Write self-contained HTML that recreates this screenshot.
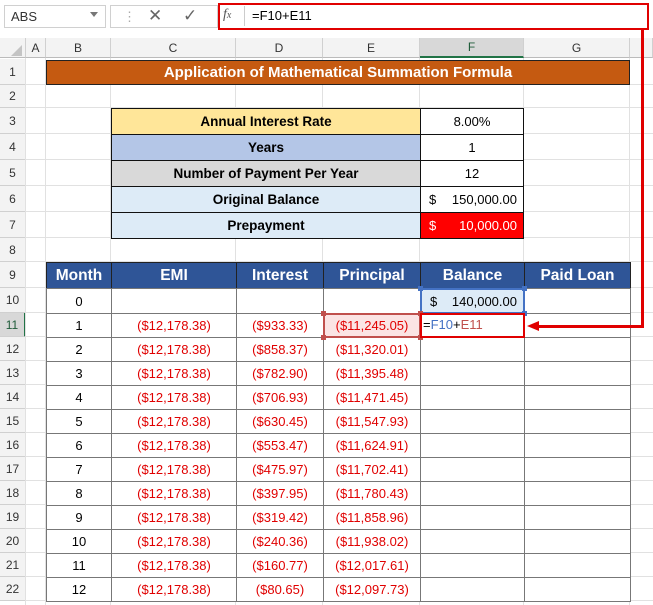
<!DOCTYPE html>
<html><head><style>
*{margin:0;padding:0;box-sizing:border-box}
body{width:653px;height:605px;overflow:hidden;background:#fff;font-family:"Liberation Sans",Calibri,sans-serif;position:relative;font-size:13px}
.a{position:absolute}
.c{position:absolute;display:flex;align-items:center;justify-content:center;white-space:nowrap}
.ch{position:absolute;top:38px;height:20px;display:flex;align-items:center;justify-content:center;color:#333;font-size:12px;border-right:1px solid #d0d0d0;background:#f3f3f3;border-bottom:1px solid #bbb}
.rh{position:absolute;left:0;width:26px;display:flex;align-items:center;justify-content:center;color:#333;font-size:12px;background:#f3f3f3;border-bottom:1px solid #d0d0d0;border-right:1px solid #bbb}
.red{color:#e00000}
</style></head><body>
<!-- top bar -->
<div class="a" style="left:0;top:0;width:653px;height:38px;background:#fff"></div>
<div class="a" style="left:4px;top:5px;width:102px;height:23px;border:1px solid #d0d0d0"></div>
<div class="a" style="left:11px;top:9px;font-size:13px;color:#333">ABS</div>
<div class="a" style="left:90px;top:12px;width:0;height:0;border-left:4px solid transparent;border-right:4px solid transparent;border-top:5px solid #777"></div>
<div class="a" style="left:123px;top:9px;color:#aaa">⋮</div>
<div class="a" style="left:110px;top:5px;width:108px;height:23px;border:1px solid #d0d0d0"></div>
<div class="a" style="left:148px;top:6px;font-size:17px;color:#666">✕</div>
<div class="a" style="left:183px;top:6px;font-size:17px;color:#666">✓</div>
<div class="a" style="left:218px;top:3px;width:431px;height:27px;border:2px solid #e00000"></div>
<div class="a" style="left:244px;top:6px;width:1px;height:20px;background:#ccc"></div>
<div class="a" style="left:223px;top:7px;font-family:'Liberation Serif',serif;font-style:italic;color:#555;font-size:14px">f<span style="font-size:10px">x</span></div>
<div class="a" style="left:252px;top:8px;font-size:13px;color:#000">=F10+E11</div>
<div class="a" style="left:0;top:30px;width:653px;height:8px;background:#fff"></div>
<!-- column headers -->
<div class="ch" style="left:0;width:26px;background:#f3f3f3"><div style="width:0;height:0;border-left:11px solid transparent;border-bottom:11px solid #c4c4c4;margin:6px 0 0 8px"></div></div>
<div class="ch" style="left:26px;width:20px">A</div>
<div class="ch" style="left:46px;width:65px">B</div>
<div class="ch" style="left:111px;width:125px">C</div>
<div class="ch" style="left:236px;width:87px">D</div>
<div class="ch" style="left:323px;width:97px">E</div>
<div class="ch" style="left:420px;width:104px;background:#d8d8d8;border-bottom:2px solid #217346;color:#1e5b39">F</div>
<div class="ch" style="left:524px;width:106px">G</div>
<div class="ch" style="left:630px;width:23px"></div>
<div id="g"></div>
<script>
var tops=[59,85,108,134,160,186,212,238,262,288,313,337];for(var i=13;i<=23;i++)tops.push(361+(i-13)*24);
var h='';
var cols=[46,111,236,323,420,524,630];
for(var r=1;r<=22;r++){var t=tops[r-1],b=tops[r];
 var hl=r==11;
 h+='<div class="rh" style="top:'+t+'px;height:'+(b-t)+'px;'+(hl?'background:#d8d8d8;border-right:2px solid #217346;color:#1e5b39':'')+'">'+r+'</div>';
 h+='<div class="a" style="left:26px;top:'+(b-1)+'px;width:627px;height:1px;background:#e1e1e1"></div>';
}
for(var j=0;j<cols.length;j++)h+='<div class="a" style="left:'+(cols[j]-1)+'px;top:58px;width:1px;height:547px;background:#e1e1e1"></div>';
h+='<div class="a" style="left:25px;top:58px;width:1px;height:547px;background:#e1e1e1"></div>';
// title
h+='<div class="c" style="left:46px;top:60px;width:584px;height:25px;background:#c55a11;border:1px solid #222;color:#fff;font-weight:bold;font-size:15px">Application of Mathematical Summation Formula</div>';
// info table
var info=[['Annual Interest Rate','#ffe699','8.00%'],['Years','#b4c6e7','1'],['Number of Payment Per Year','#d9d9d9','12'],['Original Balance','#ddebf7','$'],['Prepayment','#ddebf7','$']];
for(var k=0;k<5;k++){var t=tops[2+k],hh=tops[3+k]-t;
 h+='<div class="c" style="left:111px;top:'+t+'px;width:310px;height:'+(hh+1)+'px;background:'+info[k][1]+';border:1px solid #111;font-weight:bold;font-size:13.5px">'+info[k][0]+'</div>';
 if(k<3)h+='<div class="c" style="left:420px;top:'+t+'px;width:104px;height:'+(hh+1)+'px;background:#fff;border:1px solid #111">'+info[k][2]+'</div>';
 else{var bg=k==4?'#ff0000':'#fff',fc=k==4?'#fff':'#000',v=k==4?'10,000.00':'150,000.00';
 h+='<div class="c" style="left:420px;top:'+t+'px;width:104px;height:'+(hh+1)+'px;background:'+bg+';color:'+fc+';border:1px solid #111;justify-content:space-between;padding:0 6px 0 8px"><span>$</span><span>'+v+'</span></div>';}
}
// main header
var hd=['Month','EMI','Interest','Principal','Balance','Paid Loan'];
for(var k=0;k<6;k++)h+='<div class="c" style="left:'+cols[k]+'px;top:262px;width:'+(cols[k+1]-cols[k]+1)+'px;height:27px;background:#2f5597;color:#fff;font-weight:bold;font-size:15.5px;border:1px solid #222">'+hd[k]+'</div>';
var emi='($12,178.38)';
var it=['','($933.33)','($858.37)','($782.90)','($706.93)','($630.45)','($553.47)','($475.97)','($397.95)','($319.42)','($240.36)','($160.77)','($80.65)'];
var pr=['','($11,245.05)','($11,320.01)','($11,395.48)','($11,471.45)','($11,547.93)','($11,624.91)','($11,702.41)','($11,780.43)','($11,858.96)','($11,938.02)','($12,017.61)','($12,097.73)'];
for(var m=0;m<=12;m++){var t=tops[9+m],hh=tops[10+m]-t;
 var vals=[m,m?emi:'',it[m],pr[m],'',''];
 for(var k=0;k<6;k++){var bg='#fff';if(m==1&&k==3)bg='#fbe4e4';if(m==0&&k==4)bg='#ddebf7';
  h+='<div class="c '+(k>0?'red':'')+'" style="left:'+cols[k]+'px;top:'+t+'px;width:'+(cols[k+1]-cols[k]+1)+'px;height:'+(hh+1)+'px;background:'+bg+';border:1px solid #777;font-size:13px">'+vals[k]+'</div>';}
}
// balance 140000
h+='<div class="c" style="left:420px;top:288px;width:105px;height:26px;border:2px solid #4472c4;justify-content:space-between;padding:0 6px 0 8px;background:#ddebf7"><span>$</span><span>140,000.00</span></div>';
[[418,286],[522,286],[418,311],[522,311]].forEach(function(p){h+='<div class="a" style="left:'+p[0]+'px;top:'+p[1]+'px;width:5px;height:5px;background:#4472c4"></div>'});
h+='<div class="a" style="left:323px;top:313px;width:98px;height:25px;border:2px solid #c0504d"></div>';
[[321,311],[418,311],[321,335],[418,335]].forEach(function(p){h+='<div class="a" style="left:'+p[0]+'px;top:'+p[1]+'px;width:5px;height:5px;background:#c0504d"></div>'});
h+='<div class="a" style="left:420px;top:313px;width:105px;height:25px;border:2px solid #e00000;background:#fff;padding:2px 1px;font-size:13px">=<span style="color:#4472c4">F10</span>+<span style="color:#c0504d">E11</span></div>';
// arrow
h+='<div class="a" style="left:641px;top:30px;width:3px;height:298px;background:#e00000"></div>';
h+='<div class="a" style="left:537px;top:325px;width:107px;height:3px;background:#e00000"></div>';
h+='<div class="a" style="left:527px;top:321px;width:0;height:0;border-top:5px solid transparent;border-bottom:5px solid transparent;border-right:12px solid #e00000"></div>';
document.getElementById('g').innerHTML=h;
</script>
</body></html>
